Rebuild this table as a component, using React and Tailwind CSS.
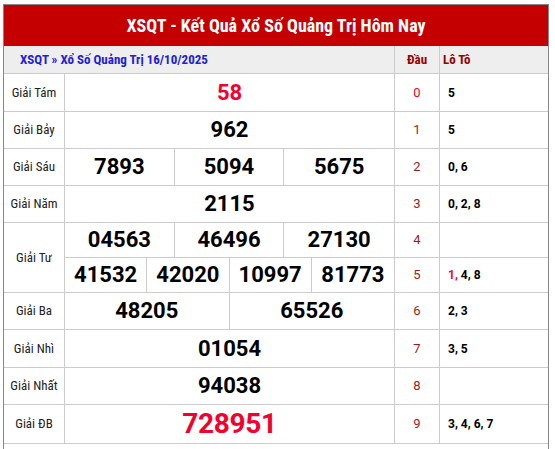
import React from "react";

function Label({ children, span }) {
  return (
    <div
      className={`flex items-center justify-center border-r border-b border-[#ccc] font-['Roboto_Condensed',Roboto,sans-serif] text-[13px] text-[#222] ${span ? "row-span-2" : ""}`}
    >
      {children}
    </div>
  );
}

function Nums({ items, red, big }) {
  const cols = items.length;
  const colCls = cols === 1 ? "grid-cols-1" : cols === 2 ? "grid-cols-2" : cols === 3 ? "grid-cols-3" : "grid-cols-4";
  return (
    <div className={`grid ${colCls} border-r border-b border-[#ccc]`}>
      {items.map((n, i) => (
        <div
          key={i}
          className={`flex items-center justify-center font-['Roboto',sans-serif] font-bold leading-none ${i < cols - 1 ? "border-r border-[#ccc]" : ""} ${red ? "text-[#f5002d]" : "text-black"} ${big ? "text-[28px] tracking-[-0.3px]" : "text-[22px]"}`}
        >
          {n}
        </div>
      ))}
    </div>
  );
}

function Dau({ children, red }) {
  return (
    <div
      className={`flex items-center justify-center border-r border-b border-[#ccc] font-['Roboto',sans-serif] text-[13px] ${red ? "text-[#f5002d]" : "text-[#9b1b1b]"}`}
    >
      {children}
    </div>
  );
}

function Loto({ children }) {
  return (
    <div className="flex items-center border-b border-[#ccc] pl-2 font-['Roboto',sans-serif] text-[12px] font-bold text-black">
      {children}
    </div>
  );
}

export default function App() {
  return (
    <div className="h-[449px] w-[555px] overflow-hidden bg-white">
      <div className="ml-[3px] mt-[4px] w-[546px] border-t border-r border-l border-[#888]">
        <div className="flex h-[41px] items-center justify-center bg-[#c50000] pb-[1px] font-['Roboto_Condensed',Roboto,sans-serif] text-[18px] font-bold text-white">
          XSQT - Kết Quả Xổ Số Quảng Trị Hôm Nay
        </div>
        <div className="grid h-[28px] grid-cols-[391px_45px_108px] border-b border-[#ccc] bg-[#eeeeee] font-['Roboto_Condensed',Roboto,sans-serif] text-[13px] font-bold">
          <div className="flex items-center border-r border-[#ccc] pl-[16px] text-[#2020d8]">
            XSQT » Xổ Số Quảng Trị 16/10/2025
          </div>
          <div className="flex items-center justify-center border-r border-[#ccc] text-[#990000]">Đầu</div>
          <div className="flex items-center pl-[3px] text-[#990000]">Lô Tô</div>
        </div>
        <div className="grid grid-cols-[61px_330px_45px_108px] grid-rows-[38px_37px_37px_37px_35px_35px_37px_38px_37px_39px]">
          <Label>Giải Tám</Label>
          <Nums items={["58"]} red />
          <Dau red>0</Dau>
          <Loto>5</Loto>

          <Label>Giải Bảy</Label>
          <Nums items={["962"]} />
          <Dau>1</Dau>
          <Loto>5</Loto>

          <Label>Giải Sáu</Label>
          <Nums items={["7893", "5094", "5675"]} />
          <Dau>2</Dau>
          <Loto>0, 6</Loto>

          <Label>Giải Năm</Label>
          <Nums items={["2115"]} />
          <Dau>3</Dau>
          <Loto>0, 2, 8</Loto>

          <Label span>Giải Tư</Label>
          <Nums items={["04563", "46496", "27130"]} />
          <Dau>4</Dau>
          <Loto></Loto>

          <Nums items={["41532", "42020", "10997", "81773"]} />
          <Dau>5</Dau>
          <Loto>
            <span className="text-[#f5002d]">1,</span>&nbsp;4, 8
          </Loto>

          <Label>Giải Ba</Label>
          <Nums items={["48205", "65526"]} />
          <Dau>6</Dau>
          <Loto>2, 3</Loto>

          <Label>Giải Nhì</Label>
          <Nums items={["01054"]} />
          <Dau>7</Dau>
          <Loto>3, 5</Loto>

          <Label>Giải Nhất</Label>
          <Nums items={["94038"]} />
          <Dau>8</Dau>
          <Loto></Loto>

          <Label>Giải ĐB</Label>
          <Nums items={["728951"]} red big />
          <Dau>9</Dau>
          <Loto>3, 4, 6, 7</Loto>
        </div>
        <div className="h-[20px]"></div>
      </div>
    </div>
  );
}
